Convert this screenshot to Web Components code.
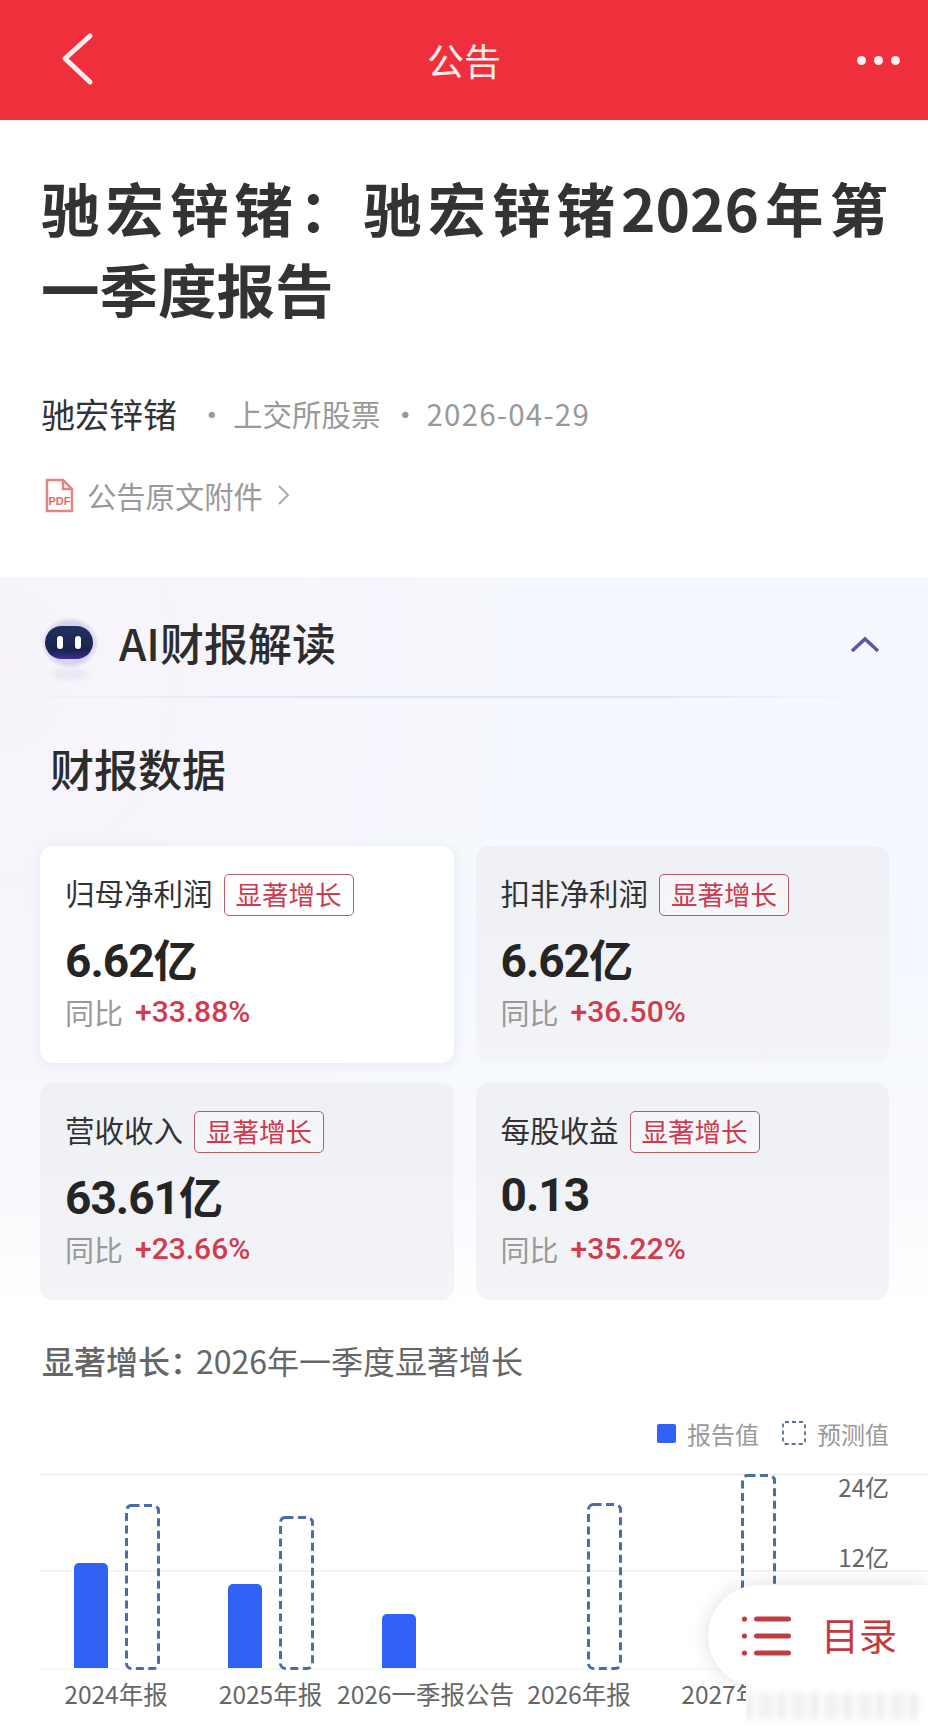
<!DOCTYPE html>
<html lang="zh-CN"><head><meta charset="utf-8"><title>公告</title>
<style>
html,body{margin:0;padding:0;background:#fff}
body{width:928px;height:1730px;overflow:hidden;position:relative;font-family:"Noto Sans CJK SC","Noto Sans",sans-serif;color:#333}
</style></head><body>
<app-header title-text="公告"></app-header>
<article-head></article-head>
<ai-panel>
  <metric-card slot="cards" active label="归母净利润" value="6.62亿" delta="+33.88%"></metric-card>
  <metric-card slot="cards" label="扣非净利润" value="6.62亿" delta="+36.50%"></metric-card>
  <metric-card slot="cards" label="营收收入" value="63.61亿" delta="+23.66%"></metric-card>
  <metric-card slot="cards" label="每股收益" value="0.13" delta="+35.22%"></metric-card>
</ai-panel>
<earnings-chart></earnings-chart>
<toc-fab></toc-fab>
<script>
function def(name,html){
  customElements.define(name,class extends HTMLElement{
    constructor(){super();this.attachShadow({mode:'open'}).innerHTML=typeof html==='function'?html(this):html;}
  });
}
def('app-header',el=>`<style>
:host{display:grid;grid-template-columns:1fr auto 1fr;align-items:center;height:120px;background:#ef2f3c;color:#fdeced;box-sizing:border-box;padding:0 28px}
h1{margin:0;font:400 37px/1 "Noto Sans CJK SC",sans-serif;position:relative;top:0}
.r{justify-self:end;display:flex;gap:8px}.r i{width:9px;height:9px;border-radius:50%;background:#fdf2f3}
svg{display:block;margin-left:30px}
</style>
<svg width="40" height="60" viewBox="0 0 40 60"><path d="M32 6 7 28.500 32 52" fill="none" stroke="#fdeced" stroke-width="5" stroke-linecap="round" stroke-linejoin="round"/></svg>
<h1>${el.getAttribute('title-text')}</h1>
<div class="r"><i></i><i></i><i></i></div>`);
def('article-head',`<style>
:host{display:block;padding:46px 40px 62px 41px;font-family:"Noto Sans CJK SC",sans-serif}
h2{margin:0;font-size:58.500px;line-height:81px;font-weight:700;color:#333}
h2 span{display:block}
h2 .j{text-align:justify;text-align-last:justify}
.meta{display:flex;align-items:center;height:40px;margin-top:65px;font-size:29.500px;color:#999;white-space:nowrap}
.meta b{font-weight:400;font-size:34px;color:#333;width:135px}
.meta i{font-style:normal;box-sizing:border-box;display:block}
.meta .d{letter-spacing:1.200px}
.att{display:flex;align-items:center;height:40px;margin-top:42px;font-size:29.300px;color:#999;white-space:nowrap}
.att svg.p{margin:0 13px 0 4px;display:block}
.att svg.c{margin-left:14px;display:block}
</style>
<h2><span class="j">驰宏锌锗：驰宏锌锗2026年第</span><span>一季度报告</span></h2>
<div class="meta"><b>驰宏锌锗</b><i style="width:57px;padding-left:21px">·</i><span>上交所股票</span><i style="width:46px;padding-left:10px">·</i><span class="d">2026-04-29</span></div>
<div class="att"><svg class="p" width="29" height="35" viewBox="0 0 29 35"><path d="M2 2H18L27 11V33H2Z" fill="#fff" stroke="#e3867e" stroke-width="2.500"/><path d="M18 2V11H27" fill="none" stroke="#e3867e" stroke-width="2.500"/><text x="14.500" y="27" text-anchor="middle" font-family="Liberation Sans" font-weight="700" font-size="11" fill="#d96f68">PDF</text></svg><span>公告原文附件</span><svg class="c" width="13" height="22" viewBox="0 0 13 22"><path d="M2 2 11 11 2 20" fill="none" stroke="#aaa" stroke-width="2"/></svg></div>`);
def('ai-panel',`<style>
:host{display:block;height:733px;box-sizing:border-box;padding:0 39px 0 40px;font-family:"Noto Sans CJK SC",sans-serif;
background:radial-gradient(ellipse 520px 620px at 0 90px,rgba(248,243,250,.95),rgba(248,243,250,0)),linear-gradient(180deg,#f5f8fe 0,#f5f8fe 400px,#f9fafd 620px,#fff 733px)}
.top{display:flex;align-items:center;height:119px;box-sizing:border-box;padding-top:14px}
.top svg.r{display:block}
.top h3{margin:0 0 4px 19px;font-size:44px;font-weight:500;line-height:60px;color:#2d2d2d;flex:1;white-space:nowrap}
.top svg.u{display:block;margin-right:9px}
.rule{height:2px;margin:0 42px 0 2px;background:linear-gradient(90deg,rgba(225,230,242,.2),#dfe4f1 35%,#dfe4f1 75%,rgba(225,230,242,.1))}
h4{margin:40px 0 0;padding:0 0 0 10px;font-size:44px;font-weight:500;line-height:60px;color:#2c2c2c}
.grid{display:grid;grid-template-columns:1fr 1fr;grid-auto-rows:217px;column-gap:22px;row-gap:20px;margin-top:48px}
</style>
<div class="top"><svg class="r" width="60" height="66" viewBox="0 0 60 66" style="margin-top:10px"><defs><radialGradient id="g" cx=".5" cy=".5" r=".55"><stop offset=".75" stop-color="#d8d3f0"/><stop offset="1" stop-color="#f2effa" stop-opacity=".3"/></radialGradient><linearGradient id="b" x1="0" y1="0" x2="0" y2="1"><stop offset="0" stop-color="#21315b"/><stop offset=".75" stop-color="#1c2450"/><stop offset="1" stop-color="#3d2f96"/></linearGradient><filter id="f"><feGaussianBlur stdDeviation="2.500"/></filter></defs><ellipse cx="30" cy="58" rx="19" ry="6" fill="#e9e9f3" filter="url(#f)"/><ellipse cx="30" cy="27" rx="28" ry="25" fill="url(#g)"/><rect x="5" y="10" width="48" height="33" rx="16.500" fill="url(#b)"/><rect x="17" y="20" width="6" height="13" rx="3" fill="#fff"/><rect x="35" y="20" width="6" height="13" rx="3" fill="#fff"/></svg>
<h3>AI财报解读</h3><svg class="u" width="30" height="18" viewBox="0 0 30 18"><path d="M2 16 15 4 28 16" fill="none" stroke="#5d57a3" stroke-width="3.500"/></svg></div>
<div class="rule"></div>
<h4>财报数据</h4>
<div class="grid"><slot name="cards"></slot></div>`);
def('metric-card',el=>`<style>
:host{display:block;box-sizing:border-box;padding:28px 20px 0 25px;border-radius:13px;background:${el.hasAttribute('active')?'#fff':'linear-gradient(180deg,#eef0f5,#f3f4f7)'};${el.hasAttribute('active')?'box-shadow:0 2px 12px rgba(70,90,140,.1);':''}font-family:"Noto Sans CJK SC",sans-serif}
.a{display:flex;align-items:center;gap:11px;height:42px}
.l{font-size:29.500px;line-height:36px;padding-bottom:7px;color:#333;white-space:nowrap}
.b{box-sizing:border-box;height:42px;width:130px;display:flex;align-items:center;justify-content:center;padding-bottom:4px;border:1px solid #b85a68;border-radius:5px;font-size:26.500px;color:#cf3a4f;white-space:nowrap;background:rgba(255,255,255,.35)}
.v{margin-top:14px;height:56px;line-height:56px;font-family:Roboto,"Noto Sans CJK SC",sans-serif;font-weight:700;font-size:46px;letter-spacing:-1px;color:#252525;white-space:nowrap}
.v span{font-family:"Noto Sans CJK SC",sans-serif;font-size:44px}
.d{margin-top:6px;height:40px;line-height:40px;font-size:29px;color:#999;white-space:nowrap;display:flex;gap:12px}
.d b{font-family:Roboto,"Noto Sans CJK SC",sans-serif;font-weight:500;color:#d23a4e;font-size:30px}
</style>
<div class="a"><span class="l">${el.getAttribute('label')}</span><span class="b">显著增长</span></div>
<div class="v">${el.getAttribute('value').replace('亿','<span>亿</span>')}</div>
<div class="d"><span>同比</span><b>${el.getAttribute('delta')}</b></div>`);
(function(){
const solid=[[74,1563],[228,1584],[382,1614]];
const dash=[[125,1504],[279,1516],[587,1503],[741,1474]];
const bars=solid.map(([x,t])=>`<path d="M${x} 1668V${t+5}a5 5 0 0 1 5-5H${x+29}a5 5 0 0 1 5 5V1668Z" fill="#2f62f5"/>`).join('');
const dashed=dash.map(([x,t])=>`<rect x="${x+1.5}" y="${t+1.5}" width="32" height="${1668-t-1}" rx="5" fill="none" stroke="#4a6ca8" stroke-width="3" stroke-dasharray="8 4.500"/>`).join('');
const labels=[[116,'2024年报'],[270.500,'2025年报'],[425.500,'2026一季报公告'],[579,'2026年报'],[733,'2027年报']];
def('earnings-chart',`<style>
:host{display:block;font-family:"Noto Sans CJK SC",sans-serif}
.s{height:60px;line-height:60px;padding:0 0 0 42px;margin-top:20px;font-size:32px;color:#666;white-space:nowrap}
.s b{font-weight:500;margin-right:-6px}
.lg{display:flex;justify-content:flex-end;align-items:center;height:40px;margin-top:23px;padding-right:39px;font-size:24px;color:#999;white-space:nowrap}
.lg i{display:block;box-sizing:border-box}
.lg .f{width:19px;height:19px;background:#2f62f5;border-radius:2px;margin-right:11px}
.lg svg{display:block;margin:0 11px 0 23px}
svg.c{display:block;margin-top:2px}
text{font-family:"Noto Sans CJK SC",sans-serif}
</style>
<div class="s"><b>显著增长：</b>2026年一季度显著增长</div>
<div class="lg"><i class="f"></i><span>报告值</span><svg width="24" height="24" viewBox="0 0 24 24"><rect x="1" y="1" width="22" height="22" rx="2" fill="none" stroke="#5a7196" stroke-width="1.800" stroke-dasharray="4 3"/></svg><span>预测值</span></div>
<svg class="c" width="928" height="275" viewBox="0 1455 928 275">
<g stroke-width="1.500"><line x1="40" x2="928" y1="1474.500" y2="1474.500" stroke="#eeeeee"/><line x1="40" x2="928" y1="1571" y2="1571" stroke="#f1f1f1"/><line x1="40" x2="928" y1="1669" y2="1669" stroke="#f6f6f6"/></g>
${dashed}${bars}
<g font-size="24" fill="#666" text-anchor="end"><text x="889" y="1497">24亿</text><text x="889" y="1567">12亿</text></g>
<g font-size="24.500" fill="#666" text-anchor="middle">${labels.map(([x,t])=>`<text x="${x}" y="1704">${t}</text>`).join('')}</g>
</svg>`);
})();
def('toc-fab',`<style>
:host{position:absolute;left:708px;top:1585px;width:220px;height:102px;display:flex;align-items:center;box-sizing:border-box;padding:0 0 0 33px;background:#fff;border-radius:51px 0 0 51px;box-shadow:0 0 20px rgba(0,0,0,.13);font-family:"Noto Sans CJK SC",sans-serif}
svg{display:block}
span{margin-left:30px;font-size:38px;color:#c23b40;line-height:1;white-space:nowrap;padding-bottom:4px}
.band{position:absolute;left:38px;top:100px;width:182px;height:50px;background:#fff;overflow:hidden}
.band i{position:absolute;left:0;top:8px;width:174px;height:26px;filter:blur(3px);background:repeating-linear-gradient(90deg,#e8e8e8 0 6px,#fff 6px 12px,#f1f1f1 12px 26px,#fbfbfb 26px 33px)}
</style>
<svg width="50" height="44" viewBox="0 0 50 44"><g fill="#c23b40"><circle cx="3.500" cy="5" r="2.600"/><circle cx="3.500" cy="22" r="2.600"/><circle cx="3.500" cy="39" r="2.600"/><rect x="13" y="2.500" width="37" height="5" rx="2.500"/><rect x="13" y="19.500" width="37" height="5" rx="2.500"/><rect x="13" y="36.500" width="37" height="5" rx="2.500"/></g></svg>
<span>目录</span><div class="band"><i></i></div>`);
</script>
</body></html>
